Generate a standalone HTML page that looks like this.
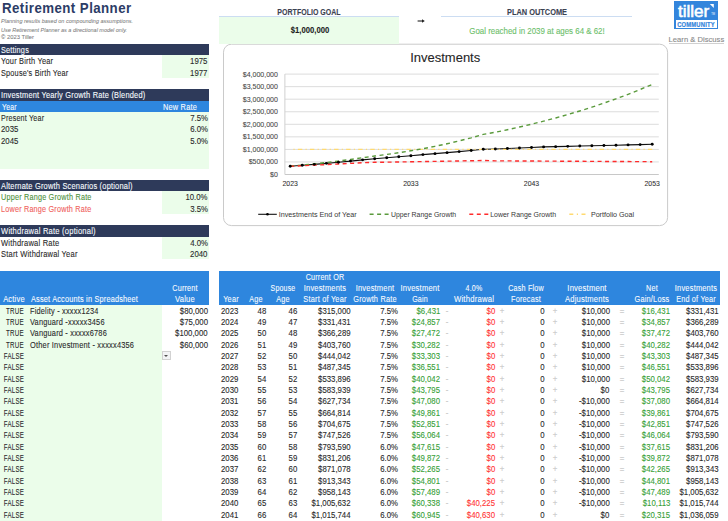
<!DOCTYPE html>
<html><head><meta charset="utf-8"><title>Retirement Planner</title>
<style>
html,body{margin:0;padding:0;background:#fff;}
body{width:728px;height:521px;position:relative;overflow:hidden;font-family:"Liberation Sans", sans-serif;}
.t{position:absolute;white-space:nowrap;line-height:1;-webkit-text-stroke:0.1px currentColor;}
.r{position:absolute;}
</style></head><body>
<svg class="r" style="left:0;top:0" width="728" height="521" viewBox="0 0 728 521" font-family='"Liberation Sans", sans-serif'><rect x="223.5" y="44.2" width="444.1" height="181.4" rx="8" ry="8" fill="#fff" stroke="#CACACA" stroke-width="1"/><line x1="284.9" x2="658.8" y1="161.95" y2="161.95" stroke="#DCDCDC" stroke-width="1"/><line x1="284.9" x2="658.8" y1="149.40" y2="149.40" stroke="#DCDCDC" stroke-width="1"/><line x1="284.9" x2="658.8" y1="136.85" y2="136.85" stroke="#DCDCDC" stroke-width="1"/><line x1="284.9" x2="658.8" y1="124.30" y2="124.30" stroke="#DCDCDC" stroke-width="1"/><line x1="284.9" x2="658.8" y1="111.75" y2="111.75" stroke="#DCDCDC" stroke-width="1"/><line x1="284.9" x2="658.8" y1="99.20" y2="99.20" stroke="#DCDCDC" stroke-width="1"/><line x1="284.9" x2="658.8" y1="86.65" y2="86.65" stroke="#DCDCDC" stroke-width="1"/><line x1="284.9" x2="658.8" y1="74.10" y2="74.10" stroke="#DCDCDC" stroke-width="1"/><line x1="284.9" x2="658.8" y1="174.5" y2="174.5" stroke="#C8C8C8" stroke-width="1"/><line x1="284.9" x2="284.9" y1="74.10" y2="174.5" stroke="#D0D0D0" stroke-width="1"/><text x="277.9" y="177.00" text-anchor="end" font-size="7.03" fill="#484848" stroke="#484848" stroke-width="0.08">$0</text><text x="277.9" y="164.45" text-anchor="end" font-size="7.03" fill="#484848" stroke="#484848" stroke-width="0.08">$500,000</text><text x="277.9" y="151.90" text-anchor="end" font-size="7.03" fill="#484848" stroke="#484848" stroke-width="0.08">$1,000,000</text><text x="277.9" y="139.35" text-anchor="end" font-size="7.03" fill="#484848" stroke="#484848" stroke-width="0.08">$1,500,000</text><text x="277.9" y="126.80" text-anchor="end" font-size="7.03" fill="#484848" stroke="#484848" stroke-width="0.08">$2,000,000</text><text x="277.9" y="114.25" text-anchor="end" font-size="7.03" fill="#484848" stroke="#484848" stroke-width="0.08">$2,500,000</text><text x="277.9" y="101.70" text-anchor="end" font-size="7.03" fill="#484848" stroke="#484848" stroke-width="0.08">$3,000,000</text><text x="277.9" y="89.15" text-anchor="end" font-size="7.03" fill="#484848" stroke="#484848" stroke-width="0.08">$3,500,000</text><text x="277.9" y="76.60" text-anchor="end" font-size="7.03" fill="#484848" stroke="#484848" stroke-width="0.08">$4,000,000</text><text x="290.20" y="185.9" text-anchor="middle" font-size="6.9" fill="#333" stroke="#333" stroke-width="0.08">2023</text><text x="410.87" y="185.9" text-anchor="middle" font-size="6.9" fill="#333" stroke="#333" stroke-width="0.08">2033</text><text x="531.53" y="185.9" text-anchor="middle" font-size="6.9" fill="#333" stroke="#333" stroke-width="0.08">2043</text><text x="652.20" y="185.9" text-anchor="middle" font-size="6.9" fill="#333" stroke="#333" stroke-width="0.08">2053</text><text x="445.2" y="61.7" text-anchor="middle" font-size="13" fill="#262626" stroke="#262626" stroke-width="0.1">Investments</text><polyline points="290.20,166.18 302.27,165.31 314.33,164.37 326.40,163.35 338.47,162.27 350.53,161.10 362.60,159.84 374.67,158.74 386.73,157.81 398.80,156.81 410.87,155.74 422.93,154.58 435.00,153.64 447.07,152.64 459.13,151.58 471.20,150.45 483.27,149.26 495.33,149.00 507.40,148.49 519.47,147.97 531.53,147.44 543.60,146.90 555.67,146.63 567.73,146.35 579.80,146.07 591.87,145.78 603.93,145.50 616.00,145.21 628.07,144.91 640.13,144.62 652.20,144.32" fill="none" stroke="#111" stroke-width="1.1"/><line x1="290.20" x2="652.20" y1="149.40" y2="149.40" stroke="#FFDA70" stroke-width="1.4" stroke-dasharray="4.4 3.3 1.1 3.27" stroke-dashoffset="4.4"/><polyline points="290.20,166.13 302.27,165.04 314.33,163.84 326.40,162.53 338.47,161.08 350.53,159.48 362.60,157.73 374.67,156.05 386.73,154.46 398.80,152.71 410.87,150.78 422.93,148.66 435.00,146.32 447.07,143.76 459.13,140.93 471.20,137.83 483.27,134.41 495.33,132.26 507.40,129.72 519.47,127.04 531.53,124.19 543.60,121.17 555.67,117.97 567.73,114.58 579.80,110.98 591.87,107.17 603.93,103.13 616.00,98.85 628.07,94.31 640.13,89.50 652.20,84.40" fill="none" stroke="#5A9A3C" stroke-width="1.4" stroke-dasharray="4 3.5"/><polyline points="290.20,166.27 302.27,165.73 314.33,165.17 326.40,164.59 338.47,163.99 350.53,163.38 362.60,162.74 374.67,162.32 386.73,162.15 398.80,161.97 410.87,161.78 422.93,161.59 435.00,161.38 447.07,161.18 459.13,160.96 471.20,160.74 483.27,160.51 495.33,160.83 507.40,160.90 519.47,160.97 531.53,161.03 543.60,161.10 555.67,161.17 567.73,161.23 579.80,161.30 591.87,161.37 603.93,161.43 616.00,161.50 628.07,161.56 640.13,161.63 652.20,161.69" fill="none" stroke="#FF2B2B" stroke-width="1.4" stroke-dasharray="4 3.5"/><circle cx="290.20" cy="166.18" r="1.45" fill="#000"/><circle cx="302.27" cy="165.31" r="1.45" fill="#000"/><circle cx="314.33" cy="164.37" r="1.45" fill="#000"/><circle cx="326.40" cy="163.35" r="1.45" fill="#000"/><circle cx="338.47" cy="162.27" r="1.45" fill="#000"/><circle cx="350.53" cy="161.10" r="1.45" fill="#000"/><circle cx="362.60" cy="159.84" r="1.45" fill="#000"/><circle cx="374.67" cy="158.74" r="1.45" fill="#000"/><circle cx="386.73" cy="157.81" r="1.45" fill="#000"/><circle cx="398.80" cy="156.81" r="1.45" fill="#000"/><circle cx="410.87" cy="155.74" r="1.45" fill="#000"/><circle cx="422.93" cy="154.58" r="1.45" fill="#000"/><circle cx="435.00" cy="153.64" r="1.45" fill="#000"/><circle cx="447.07" cy="152.64" r="1.45" fill="#000"/><circle cx="459.13" cy="151.58" r="1.45" fill="#000"/><circle cx="471.20" cy="150.45" r="1.45" fill="#000"/><circle cx="483.27" cy="149.26" r="1.45" fill="#000"/><circle cx="495.33" cy="149.00" r="1.45" fill="#000"/><circle cx="507.40" cy="148.49" r="1.45" fill="#000"/><circle cx="519.47" cy="147.97" r="1.45" fill="#000"/><circle cx="531.53" cy="147.44" r="1.45" fill="#000"/><circle cx="543.60" cy="146.90" r="1.45" fill="#000"/><circle cx="555.67" cy="146.63" r="1.45" fill="#000"/><circle cx="567.73" cy="146.35" r="1.45" fill="#000"/><circle cx="579.80" cy="146.07" r="1.45" fill="#000"/><circle cx="591.87" cy="145.78" r="1.45" fill="#000"/><circle cx="603.93" cy="145.50" r="1.45" fill="#000"/><circle cx="616.00" cy="145.21" r="1.45" fill="#000"/><circle cx="628.07" cy="144.91" r="1.45" fill="#000"/><circle cx="640.13" cy="144.62" r="1.45" fill="#000"/><circle cx="652.20" cy="144.32" r="1.45" fill="#000"/><line x1="258.2" x2="276.8" y1="214.3" y2="214.3" stroke="#111" stroke-width="1.1"/><circle cx="267.5" cy="214.3" r="1.3" fill="#000"/><text x="278.8" y="216.8" font-size="7.18" fill="#383838">Investments End of Year</text><line x1="369.6" x2="389.1" y1="214.3" y2="214.3" stroke="#5A9A3C" stroke-width="1.4" stroke-dasharray="4 3.5"/><text x="390.9" y="216.8" font-size="6.91" fill="#383838">Upper Range Growth</text><line x1="469.3" x2="488.8" y1="214.3" y2="214.3" stroke="#FF2B2B" stroke-width="1.4" stroke-dasharray="4 3.5"/><text x="490.2" y="216.8" font-size="6.98" fill="#383838">Lower Range Growth</text><line x1="569.3" x2="585.8" y1="214.3" y2="214.3" stroke="#FFDA70" stroke-width="1.4" stroke-dasharray="4 3.5 1.2 3.5"/><text x="590.9" y="216.8" font-size="7.15" fill="#383838">Portfolio Goal</text></svg>
<div class="r" style="left:0.00px;top:44.00px;width:209.00px;height:11.33px;background:#2E3A5A;"></div><div class="r" style="left:161.50px;top:55.33px;width:47.50px;height:22.67px;background:#EBFDEA;"></div><div class="r" style="left:0.00px;top:89.33px;width:209.00px;height:11.33px;background:#2E3A5A;"></div><div class="r" style="left:0.00px;top:100.66px;width:209.00px;height:11.33px;background:#2E86DE;"></div><div class="r" style="left:0.00px;top:112.00px;width:209.00px;height:56.67px;background:#EBFDEA;"></div><div class="r" style="left:0.00px;top:180.00px;width:209.00px;height:11.33px;background:#2E3A5A;"></div><div class="r" style="left:161.50px;top:191.33px;width:47.50px;height:22.67px;background:#EBFDEA;"></div><div class="r" style="left:0.00px;top:225.33px;width:209.00px;height:11.33px;background:#2E3A5A;"></div><div class="r" style="left:161.50px;top:236.66px;width:47.50px;height:22.67px;background:#EBFDEA;"></div><div class="r" style="left:0.00px;top:270.66px;width:209.00px;height:34.00px;background:#2E86DE;"></div><div class="r" style="left:0.00px;top:304.66px;width:161.50px;height:216.34px;background:#EBFDEA;"></div><div class="r" style="left:219.00px;top:270.66px;width:501.40px;height:34.00px;background:#2E86DE;"></div><div class="r" style="left:219.00px;top:17.00px;width:180.30px;height:26.60px;background:#EBFDEA;"></div><div class="r" style="left:219.00px;top:16.00px;width:180.30px;height:1.30px;background:#CCDDF2;"></div><div class="r" style="left:441.40px;top:16.00px;width:190.90px;height:1.30px;background:#CCDDF2;"></div><div class="r" style="left:674.10px;top:1.40px;width:43.80px;height:28.10px;background:#3385DC;"></div><div class="r" style="left:676.00px;top:19.50px;width:40.90px;height:8.60px;background:#FFFFFF;"></div><div class="r" style="left:668.60px;top:42.60px;width:55.70px;height:0.80px;background:#D0D0D0;"></div>
<div class="r" style="left:161.8px;top:351.2px;width:9px;height:9px;border:1px solid #D2D2D2;background:#F2F3F5;box-sizing:border-box"></div><div class="r" style="left:164.2px;top:354.8px;width:0;height:0;border-left:2.1px solid transparent;border-right:2.1px solid transparent;border-top:2.2px solid #505050"></div><svg class="r" style="left:410px;top:14px" width="20" height="14"><path d="M7.6 7 H13.2" stroke="#222" stroke-width="1.1"/><path d="M12.0 5.2 L14.8 7 L12.0 8.8 Z" fill="#222"/></svg><svg class="r" style="left:0;top:0" width="728" height="40"><path d="M709.8 4.0 L713.8 4.0 L713.8 8.0 Z" fill="#fff"/><text x="711.2" y="15.2" font-size="2.6" fill="#fff" font-family="Liberation Sans">TM</text></svg>
<div class="t" style="top:2px;font-size:13.8px;color:#2C3C66;font-weight:700;left:2.30px;transform:scaleX(0.9627);transform-origin:0 0;-webkit-text-stroke:0;letter-spacing:0.45px;">Retirement Planner</div><div class="t" style="top:18px;font-size:6.1px;color:#7A7A7A;font-style:italic;left:1.20px;transform:scaleX(0.9040);transform-origin:0 0;-webkit-text-stroke:0.05px currentColor;">Planning results based on compounding assumptions.</div><div class="t" style="top:27px;font-size:6.1px;color:#7A7A7A;font-style:italic;left:1.20px;transform:scaleX(0.8992);transform-origin:0 0;-webkit-text-stroke:0.05px currentColor;">Use Retirement Planner as a directional model only.</div><div class="t" style="top:34px;font-size:6.2px;color:#7A7A7A;left:1.20px;transform:scaleX(0.9475);transform-origin:0 0;-webkit-text-stroke:0.05px currentColor;">© 2023 Tiller</div><div class="t" style="top:46px;font-size:8.3px;color:#F7FAFE;left:1.30px;transform:scaleX(0.8819);transform-origin:0 0;letter-spacing:0.22px;">Settings</div><div class="t" style="top:57px;font-size:8.3px;color:#2A2A2A;left:1.30px;transform:scaleX(0.8962);transform-origin:0 0;letter-spacing:0.22px;">Your Birth Year</div><div class="t" style="top:57px;font-size:8.3px;color:#2A2A2A;right:520.40px;transform:scaleX(0.9400);transform-origin:100% 0;">1975</div><div class="t" style="top:69px;font-size:8.3px;color:#2A2A2A;left:1.30px;transform:scaleX(0.8828);transform-origin:0 0;letter-spacing:0.22px;">Spouse's Birth Year</div><div class="t" style="top:69px;font-size:8.3px;color:#2A2A2A;right:520.40px;transform:scaleX(0.9400);transform-origin:100% 0;">1977</div><div class="t" style="top:91px;font-size:8.3px;color:#F7FAFE;left:1.30px;transform:scaleX(0.8956);transform-origin:0 0;letter-spacing:0.22px;">Investment Yearly Growth Rate (Blended)</div><div class="t" style="top:103px;font-size:8.3px;color:#F7FAFE;left:1.80px;transform:scaleX(0.8326);transform-origin:0 0;letter-spacing:0.22px;">Year</div><div class="t" style="top:103px;font-size:8.3px;color:#F7FAFE;left:163.00px;transform:scaleX(0.8900);transform-origin:0 0;letter-spacing:0.22px;">New Rate</div><div class="t" style="top:114px;font-size:8.3px;color:#2A2A2A;left:1.30px;transform:scaleX(0.8613);transform-origin:0 0;letter-spacing:0.22px;">Present Year</div><div class="t" style="top:114px;font-size:8.3px;color:#2A2A2A;right:520.40px;transform:scaleX(0.9400);transform-origin:100% 0;">7.5%</div><div class="t" style="top:125px;font-size:8.3px;color:#2A2A2A;left:1.30px;transform:scaleX(0.9400);transform-origin:0 0;">2035</div><div class="t" style="top:125px;font-size:8.3px;color:#2A2A2A;right:520.40px;transform:scaleX(0.9400);transform-origin:100% 0;">6.0%</div><div class="t" style="top:137px;font-size:8.3px;color:#2A2A2A;left:1.30px;transform:scaleX(0.9400);transform-origin:0 0;">2045</div><div class="t" style="top:137px;font-size:8.3px;color:#2A2A2A;right:520.40px;transform:scaleX(0.9400);transform-origin:100% 0;">5.0%</div><div class="t" style="top:182px;font-size:8.3px;color:#F7FAFE;left:1.30px;transform:scaleX(0.8990);transform-origin:0 0;letter-spacing:0.22px;">Alternate Growth Scenarios (optional)</div><div class="t" style="top:193px;font-size:8.3px;color:#4E913C;left:1.40px;transform:scaleX(0.8771);transform-origin:0 0;letter-spacing:0.22px;">Upper Range Growth Rate</div><div class="t" style="top:193px;font-size:8.3px;color:#2A2A2A;right:520.40px;transform:scaleX(0.9400);transform-origin:100% 0;">10.0%</div><div class="t" style="top:205px;font-size:8.3px;color:#F0625D;left:1.40px;transform:scaleX(0.8751);transform-origin:0 0;letter-spacing:0.22px;">Lower Range Growth Rate</div><div class="t" style="top:205px;font-size:8.3px;color:#2A2A2A;right:520.40px;transform:scaleX(0.9400);transform-origin:100% 0;">3.5%</div><div class="t" style="top:227px;font-size:8.3px;color:#F7FAFE;left:1.30px;transform:scaleX(0.9161);transform-origin:0 0;letter-spacing:0.22px;">Withdrawal Rate (optional)</div><div class="t" style="top:239px;font-size:8.3px;color:#2A2A2A;left:1.40px;transform:scaleX(0.9101);transform-origin:0 0;letter-spacing:0.22px;">Withdrawal Rate</div><div class="t" style="top:239px;font-size:8.3px;color:#2A2A2A;right:520.40px;transform:scaleX(0.9400);transform-origin:100% 0;">4.0%</div><div class="t" style="top:250px;font-size:8.3px;color:#2A2A2A;left:1.40px;transform:scaleX(0.9075);transform-origin:0 0;letter-spacing:0.22px;">Start Withdrawal Year</div><div class="t" style="top:250px;font-size:8.3px;color:#2A2A2A;right:520.40px;transform:scaleX(0.9400);transform-origin:100% 0;">2040</div><div class="t" style="top:295px;font-size:8.3px;color:#F7FAFE;left:-136.20px;width:300px;text-align:center;transform:scaleX(0.9071);transform-origin:50% 0;letter-spacing:0.22px;">Active</div><div class="t" style="top:295px;font-size:8.3px;color:#F7FAFE;left:30.50px;transform:scaleX(0.8834);transform-origin:0 0;letter-spacing:0.22px;">Asset Accounts in Spreadsheet</div><div class="t" style="top:284px;font-size:8.3px;color:#F7FAFE;left:34.90px;width:300px;text-align:center;transform:scaleX(0.8693);transform-origin:50% 0;letter-spacing:0.22px;">Current</div><div class="t" style="top:295px;font-size:8.3px;color:#F7FAFE;left:35.40px;width:300px;text-align:center;transform:scaleX(0.9117);transform-origin:50% 0;letter-spacing:0.22px;">Value</div><div class="t" style="top:307px;font-size:8.3px;color:#2A2A2A;left:-135.50px;width:300px;text-align:center;transform:scaleX(0.7500);transform-origin:50% 0;letter-spacing:0.35px;">TRUE</div><div class="t" style="top:307px;font-size:8.3px;color:#2A2A2A;left:30.30px;transform:scaleX(0.8878);transform-origin:0 0;letter-spacing:0.22px;">Fidelity - xxxxx1234</div><div class="t" style="top:307px;font-size:8.3px;color:#2A2A2A;right:520.50px;transform:scaleX(0.9400);transform-origin:100% 0;">$80,000</div><div class="t" style="top:318px;font-size:8.3px;color:#2A2A2A;left:-135.50px;width:300px;text-align:center;transform:scaleX(0.7500);transform-origin:50% 0;letter-spacing:0.35px;">TRUE</div><div class="t" style="top:318px;font-size:8.3px;color:#2A2A2A;left:30.30px;transform:scaleX(0.8911);transform-origin:0 0;letter-spacing:0.22px;">Vanguard -xxxxx3456</div><div class="t" style="top:318px;font-size:8.3px;color:#2A2A2A;right:520.50px;transform:scaleX(0.9400);transform-origin:100% 0;">$75,000</div><div class="t" style="top:329px;font-size:8.3px;color:#2A2A2A;left:-135.50px;width:300px;text-align:center;transform:scaleX(0.7500);transform-origin:50% 0;letter-spacing:0.35px;">TRUE</div><div class="t" style="top:329px;font-size:8.3px;color:#2A2A2A;left:30.30px;transform:scaleX(0.8918);transform-origin:0 0;letter-spacing:0.22px;">Vanguard - xxxxx6786</div><div class="t" style="top:329px;font-size:8.3px;color:#2A2A2A;right:520.50px;transform:scaleX(0.9400);transform-origin:100% 0;">$100,000</div><div class="t" style="top:341px;font-size:8.3px;color:#2A2A2A;left:-135.50px;width:300px;text-align:center;transform:scaleX(0.7500);transform-origin:50% 0;letter-spacing:0.35px;">TRUE</div><div class="t" style="top:341px;font-size:8.3px;color:#2A2A2A;left:30.30px;transform:scaleX(0.8954);transform-origin:0 0;letter-spacing:0.22px;">Other Investment - xxxxx4356</div><div class="t" style="top:341px;font-size:8.3px;color:#2A2A2A;right:520.50px;transform:scaleX(0.9400);transform-origin:100% 0;">$60,000</div><div class="t" style="top:352px;font-size:8.3px;color:#2A2A2A;left:-136.20px;width:300px;text-align:center;transform:scaleX(0.7397);transform-origin:50% 0;letter-spacing:0.35px;">FALSE</div><div class="t" style="top:363px;font-size:8.3px;color:#2A2A2A;left:-136.20px;width:300px;text-align:center;transform:scaleX(0.7397);transform-origin:50% 0;letter-spacing:0.35px;">FALSE</div><div class="t" style="top:375px;font-size:8.3px;color:#2A2A2A;left:-136.20px;width:300px;text-align:center;transform:scaleX(0.7397);transform-origin:50% 0;letter-spacing:0.35px;">FALSE</div><div class="t" style="top:386px;font-size:8.3px;color:#2A2A2A;left:-136.20px;width:300px;text-align:center;transform:scaleX(0.7397);transform-origin:50% 0;letter-spacing:0.35px;">FALSE</div><div class="t" style="top:397px;font-size:8.3px;color:#2A2A2A;left:-136.20px;width:300px;text-align:center;transform:scaleX(0.7397);transform-origin:50% 0;letter-spacing:0.35px;">FALSE</div><div class="t" style="top:409px;font-size:8.3px;color:#2A2A2A;left:-136.20px;width:300px;text-align:center;transform:scaleX(0.7397);transform-origin:50% 0;letter-spacing:0.35px;">FALSE</div><div class="t" style="top:420px;font-size:8.3px;color:#2A2A2A;left:-136.20px;width:300px;text-align:center;transform:scaleX(0.7397);transform-origin:50% 0;letter-spacing:0.35px;">FALSE</div><div class="t" style="top:431px;font-size:8.3px;color:#2A2A2A;left:-136.20px;width:300px;text-align:center;transform:scaleX(0.7397);transform-origin:50% 0;letter-spacing:0.35px;">FALSE</div><div class="t" style="top:443px;font-size:8.3px;color:#2A2A2A;left:-136.20px;width:300px;text-align:center;transform:scaleX(0.7397);transform-origin:50% 0;letter-spacing:0.35px;">FALSE</div><div class="t" style="top:454px;font-size:8.3px;color:#2A2A2A;left:-136.20px;width:300px;text-align:center;transform:scaleX(0.7397);transform-origin:50% 0;letter-spacing:0.35px;">FALSE</div><div class="t" style="top:465px;font-size:8.3px;color:#2A2A2A;left:-136.20px;width:300px;text-align:center;transform:scaleX(0.7397);transform-origin:50% 0;letter-spacing:0.35px;">FALSE</div><div class="t" style="top:477px;font-size:8.3px;color:#2A2A2A;left:-136.20px;width:300px;text-align:center;transform:scaleX(0.7397);transform-origin:50% 0;letter-spacing:0.35px;">FALSE</div><div class="t" style="top:488px;font-size:8.3px;color:#2A2A2A;left:-136.20px;width:300px;text-align:center;transform:scaleX(0.7397);transform-origin:50% 0;letter-spacing:0.35px;">FALSE</div><div class="t" style="top:499px;font-size:8.3px;color:#2A2A2A;left:-136.20px;width:300px;text-align:center;transform:scaleX(0.7397);transform-origin:50% 0;letter-spacing:0.35px;">FALSE</div><div class="t" style="top:511px;font-size:8.3px;color:#2A2A2A;left:-136.20px;width:300px;text-align:center;transform:scaleX(0.7397);transform-origin:50% 0;letter-spacing:0.35px;">FALSE</div><div class="t" style="top:295px;font-size:8.3px;color:#F7FAFE;left:81.40px;width:300px;text-align:center;transform:scaleX(0.8835);transform-origin:50% 0;letter-spacing:0.22px;">Year</div><div class="t" style="top:295px;font-size:8.3px;color:#F7FAFE;left:105.50px;width:300px;text-align:center;transform:scaleX(0.8745);transform-origin:50% 0;letter-spacing:0.22px;">Age</div><div class="t" style="top:284px;font-size:8.3px;color:#F7FAFE;left:133.40px;width:300px;text-align:center;transform:scaleX(0.8416);transform-origin:50% 0;letter-spacing:0.22px;">Spouse</div><div class="t" style="top:295px;font-size:8.3px;color:#F7FAFE;left:133.40px;width:300px;text-align:center;transform:scaleX(0.8745);transform-origin:50% 0;letter-spacing:0.22px;">Age</div><div class="t" style="top:273px;font-size:8.3px;color:#F7FAFE;left:175.20px;width:300px;text-align:center;transform:scaleX(0.8672);transform-origin:50% 0;letter-spacing:0.22px;">Current OR</div><div class="t" style="top:284px;font-size:8.3px;color:#F7FAFE;left:175.20px;width:300px;text-align:center;transform:scaleX(0.8991);transform-origin:50% 0;letter-spacing:0.22px;">Investments</div><div class="t" style="top:295px;font-size:8.3px;color:#F7FAFE;left:175.20px;width:300px;text-align:center;transform:scaleX(0.8922);transform-origin:50% 0;letter-spacing:0.22px;">Start of Year</div><div class="t" style="top:284px;font-size:8.3px;color:#F7FAFE;left:225.30px;width:300px;text-align:center;transform:scaleX(0.9046);transform-origin:50% 0;letter-spacing:0.22px;">Investment</div><div class="t" style="top:295px;font-size:8.3px;color:#F7FAFE;left:225.30px;width:300px;text-align:center;transform:scaleX(0.8857);transform-origin:50% 0;letter-spacing:0.22px;">Growth Rate</div><div class="t" style="top:284px;font-size:8.3px;color:#F7FAFE;left:270.30px;width:300px;text-align:center;transform:scaleX(0.9116);transform-origin:50% 0;letter-spacing:0.22px;">Investment</div><div class="t" style="top:295px;font-size:8.3px;color:#F7FAFE;left:270.30px;width:300px;text-align:center;transform:scaleX(0.8530);transform-origin:50% 0;letter-spacing:0.22px;">Gain</div><div class="t" style="top:284px;font-size:8.3px;color:#F7FAFE;left:324.20px;width:300px;text-align:center;transform:scaleX(0.8486);transform-origin:50% 0;letter-spacing:0.22px;">4.0%</div><div class="t" style="top:295px;font-size:8.3px;color:#F7FAFE;left:324.20px;width:300px;text-align:center;transform:scaleX(0.9295);transform-origin:50% 0;letter-spacing:0.22px;">Withdrawal</div><div class="t" style="top:284px;font-size:8.3px;color:#F7FAFE;left:376.40px;width:300px;text-align:center;transform:scaleX(0.8647);transform-origin:50% 0;letter-spacing:0.22px;">Cash Flow</div><div class="t" style="top:295px;font-size:8.3px;color:#F7FAFE;left:376.40px;width:300px;text-align:center;transform:scaleX(0.8811);transform-origin:50% 0;letter-spacing:0.22px;">Forecast</div><div class="t" style="top:284px;font-size:8.3px;color:#F7FAFE;left:437.00px;width:300px;text-align:center;transform:scaleX(0.9186);transform-origin:50% 0;letter-spacing:0.22px;">Investment</div><div class="t" style="top:295px;font-size:8.3px;color:#F7FAFE;left:437.00px;width:300px;text-align:center;transform:scaleX(0.9152);transform-origin:50% 0;letter-spacing:0.22px;">Adjustments</div><div class="t" style="top:284px;font-size:8.3px;color:#F7FAFE;left:501.50px;width:300px;text-align:center;transform:scaleX(0.8690);transform-origin:50% 0;letter-spacing:0.22px;">Net</div><div class="t" style="top:295px;font-size:8.3px;color:#F7FAFE;left:501.50px;width:300px;text-align:center;transform:scaleX(0.8896);transform-origin:50% 0;letter-spacing:0.22px;">Gain/Loss</div><div class="t" style="top:284px;font-size:8.3px;color:#F7FAFE;left:546.00px;width:300px;text-align:center;transform:scaleX(0.8970);transform-origin:50% 0;letter-spacing:0.22px;">Investments</div><div class="t" style="top:295px;font-size:8.3px;color:#F7FAFE;left:546.00px;width:300px;text-align:center;transform:scaleX(0.8736);transform-origin:50% 0;letter-spacing:0.22px;">End of Year</div><div class="t" style="top:307px;font-size:8.3px;color:#2A2A2A;left:220.80px;transform:scaleX(0.9400);transform-origin:0 0;">2023</div><div class="t" style="top:307px;font-size:8.3px;color:#2A2A2A;right:461.60px;transform:scaleX(0.9400);transform-origin:100% 0;">48</div><div class="t" style="top:307px;font-size:8.3px;color:#2A2A2A;right:431.00px;transform:scaleX(0.9400);transform-origin:100% 0;">46</div><div class="t" style="top:307px;font-size:8.3px;color:#2A2A2A;right:377.80px;transform:scaleX(0.9400);transform-origin:100% 0;">$315,000</div><div class="t" style="top:307px;font-size:8.3px;color:#2A2A2A;right:330.00px;transform:scaleX(0.9400);transform-origin:100% 0;">7.5%</div><div class="t" style="top:307px;font-size:8.3px;color:#37A037;right:287.70px;transform:scaleX(0.9400);transform-origin:100% 0;">$6,431</div><div class="t" style="top:307px;font-size:8.3px;color:#CACACA;left:297.00px;width:300px;text-align:center;transform:scaleX(0.9400);transform-origin:50% 0;">-</div><div class="t" style="top:307px;font-size:8.3px;color:#FF3535;right:233.00px;transform:scaleX(0.9400);transform-origin:100% 0;">$0</div><div class="t" style="top:307px;font-size:8.3px;color:#CACACA;left:351.50px;width:300px;text-align:center;transform:scaleX(0.9400);transform-origin:50% 0;">+</div><div class="t" style="top:307px;font-size:8.3px;color:#2A2A2A;right:183.20px;transform:scaleX(0.9400);transform-origin:100% 0;">0</div><div class="t" style="top:307px;font-size:8.3px;color:#CACACA;left:404.70px;width:300px;text-align:center;transform:scaleX(0.9400);transform-origin:50% 0;">+</div><div class="t" style="top:307px;font-size:8.3px;color:#2A2A2A;right:118.40px;transform:scaleX(0.9400);transform-origin:100% 0;">$10,000</div><div class="t" style="top:307px;font-size:8.3px;color:#CACACA;left:471.50px;width:300px;text-align:center;transform:scaleX(0.9400);transform-origin:50% 0;">=</div><div class="t" style="top:307px;font-size:8.3px;color:#37A037;right:57.70px;transform:scaleX(0.9400);transform-origin:100% 0;">$16,431</div><div class="t" style="top:307px;font-size:8.3px;color:#2A2A2A;right:9.90px;transform:scaleX(0.9400);transform-origin:100% 0;">$331,431</div><div class="t" style="top:318px;font-size:8.3px;color:#2A2A2A;left:220.80px;transform:scaleX(0.9400);transform-origin:0 0;">2024</div><div class="t" style="top:318px;font-size:8.3px;color:#2A2A2A;right:461.60px;transform:scaleX(0.9400);transform-origin:100% 0;">49</div><div class="t" style="top:318px;font-size:8.3px;color:#2A2A2A;right:431.00px;transform:scaleX(0.9400);transform-origin:100% 0;">47</div><div class="t" style="top:318px;font-size:8.3px;color:#2A2A2A;right:377.80px;transform:scaleX(0.9400);transform-origin:100% 0;">$331,431</div><div class="t" style="top:318px;font-size:8.3px;color:#2A2A2A;right:330.00px;transform:scaleX(0.9400);transform-origin:100% 0;">7.5%</div><div class="t" style="top:318px;font-size:8.3px;color:#37A037;right:287.70px;transform:scaleX(0.9400);transform-origin:100% 0;">$24,857</div><div class="t" style="top:318px;font-size:8.3px;color:#CACACA;left:297.00px;width:300px;text-align:center;transform:scaleX(0.9400);transform-origin:50% 0;">-</div><div class="t" style="top:318px;font-size:8.3px;color:#FF3535;right:233.00px;transform:scaleX(0.9400);transform-origin:100% 0;">$0</div><div class="t" style="top:318px;font-size:8.3px;color:#CACACA;left:351.50px;width:300px;text-align:center;transform:scaleX(0.9400);transform-origin:50% 0;">+</div><div class="t" style="top:318px;font-size:8.3px;color:#2A2A2A;right:183.20px;transform:scaleX(0.9400);transform-origin:100% 0;">0</div><div class="t" style="top:318px;font-size:8.3px;color:#CACACA;left:404.70px;width:300px;text-align:center;transform:scaleX(0.9400);transform-origin:50% 0;">+</div><div class="t" style="top:318px;font-size:8.3px;color:#2A2A2A;right:118.40px;transform:scaleX(0.9400);transform-origin:100% 0;">$10,000</div><div class="t" style="top:318px;font-size:8.3px;color:#CACACA;left:471.50px;width:300px;text-align:center;transform:scaleX(0.9400);transform-origin:50% 0;">=</div><div class="t" style="top:318px;font-size:8.3px;color:#37A037;right:57.70px;transform:scaleX(0.9400);transform-origin:100% 0;">$34,857</div><div class="t" style="top:318px;font-size:8.3px;color:#2A2A2A;right:9.90px;transform:scaleX(0.9400);transform-origin:100% 0;">$366,289</div><div class="t" style="top:329px;font-size:8.3px;color:#2A2A2A;left:220.80px;transform:scaleX(0.9400);transform-origin:0 0;">2025</div><div class="t" style="top:329px;font-size:8.3px;color:#2A2A2A;right:461.60px;transform:scaleX(0.9400);transform-origin:100% 0;">50</div><div class="t" style="top:329px;font-size:8.3px;color:#2A2A2A;right:431.00px;transform:scaleX(0.9400);transform-origin:100% 0;">48</div><div class="t" style="top:329px;font-size:8.3px;color:#2A2A2A;right:377.80px;transform:scaleX(0.9400);transform-origin:100% 0;">$366,289</div><div class="t" style="top:329px;font-size:8.3px;color:#2A2A2A;right:330.00px;transform:scaleX(0.9400);transform-origin:100% 0;">7.5%</div><div class="t" style="top:329px;font-size:8.3px;color:#37A037;right:287.70px;transform:scaleX(0.9400);transform-origin:100% 0;">$27,472</div><div class="t" style="top:329px;font-size:8.3px;color:#CACACA;left:297.00px;width:300px;text-align:center;transform:scaleX(0.9400);transform-origin:50% 0;">-</div><div class="t" style="top:329px;font-size:8.3px;color:#FF3535;right:233.00px;transform:scaleX(0.9400);transform-origin:100% 0;">$0</div><div class="t" style="top:329px;font-size:8.3px;color:#CACACA;left:351.50px;width:300px;text-align:center;transform:scaleX(0.9400);transform-origin:50% 0;">+</div><div class="t" style="top:329px;font-size:8.3px;color:#2A2A2A;right:183.20px;transform:scaleX(0.9400);transform-origin:100% 0;">0</div><div class="t" style="top:329px;font-size:8.3px;color:#CACACA;left:404.70px;width:300px;text-align:center;transform:scaleX(0.9400);transform-origin:50% 0;">+</div><div class="t" style="top:329px;font-size:8.3px;color:#2A2A2A;right:118.40px;transform:scaleX(0.9400);transform-origin:100% 0;">$10,000</div><div class="t" style="top:329px;font-size:8.3px;color:#CACACA;left:471.50px;width:300px;text-align:center;transform:scaleX(0.9400);transform-origin:50% 0;">=</div><div class="t" style="top:329px;font-size:8.3px;color:#37A037;right:57.70px;transform:scaleX(0.9400);transform-origin:100% 0;">$37,472</div><div class="t" style="top:329px;font-size:8.3px;color:#2A2A2A;right:9.90px;transform:scaleX(0.9400);transform-origin:100% 0;">$403,760</div><div class="t" style="top:341px;font-size:8.3px;color:#2A2A2A;left:220.80px;transform:scaleX(0.9400);transform-origin:0 0;">2026</div><div class="t" style="top:341px;font-size:8.3px;color:#2A2A2A;right:461.60px;transform:scaleX(0.9400);transform-origin:100% 0;">51</div><div class="t" style="top:341px;font-size:8.3px;color:#2A2A2A;right:431.00px;transform:scaleX(0.9400);transform-origin:100% 0;">49</div><div class="t" style="top:341px;font-size:8.3px;color:#2A2A2A;right:377.80px;transform:scaleX(0.9400);transform-origin:100% 0;">$403,760</div><div class="t" style="top:341px;font-size:8.3px;color:#2A2A2A;right:330.00px;transform:scaleX(0.9400);transform-origin:100% 0;">7.5%</div><div class="t" style="top:341px;font-size:8.3px;color:#37A037;right:287.70px;transform:scaleX(0.9400);transform-origin:100% 0;">$30,282</div><div class="t" style="top:341px;font-size:8.3px;color:#CACACA;left:297.00px;width:300px;text-align:center;transform:scaleX(0.9400);transform-origin:50% 0;">-</div><div class="t" style="top:341px;font-size:8.3px;color:#FF3535;right:233.00px;transform:scaleX(0.9400);transform-origin:100% 0;">$0</div><div class="t" style="top:341px;font-size:8.3px;color:#CACACA;left:351.50px;width:300px;text-align:center;transform:scaleX(0.9400);transform-origin:50% 0;">+</div><div class="t" style="top:341px;font-size:8.3px;color:#2A2A2A;right:183.20px;transform:scaleX(0.9400);transform-origin:100% 0;">0</div><div class="t" style="top:341px;font-size:8.3px;color:#CACACA;left:404.70px;width:300px;text-align:center;transform:scaleX(0.9400);transform-origin:50% 0;">+</div><div class="t" style="top:341px;font-size:8.3px;color:#2A2A2A;right:118.40px;transform:scaleX(0.9400);transform-origin:100% 0;">$10,000</div><div class="t" style="top:341px;font-size:8.3px;color:#CACACA;left:471.50px;width:300px;text-align:center;transform:scaleX(0.9400);transform-origin:50% 0;">=</div><div class="t" style="top:341px;font-size:8.3px;color:#37A037;right:57.70px;transform:scaleX(0.9400);transform-origin:100% 0;">$40,282</div><div class="t" style="top:341px;font-size:8.3px;color:#2A2A2A;right:9.90px;transform:scaleX(0.9400);transform-origin:100% 0;">$444,042</div><div class="t" style="top:352px;font-size:8.3px;color:#2A2A2A;left:220.80px;transform:scaleX(0.9400);transform-origin:0 0;">2027</div><div class="t" style="top:352px;font-size:8.3px;color:#2A2A2A;right:461.60px;transform:scaleX(0.9400);transform-origin:100% 0;">52</div><div class="t" style="top:352px;font-size:8.3px;color:#2A2A2A;right:431.00px;transform:scaleX(0.9400);transform-origin:100% 0;">50</div><div class="t" style="top:352px;font-size:8.3px;color:#2A2A2A;right:377.80px;transform:scaleX(0.9400);transform-origin:100% 0;">$444,042</div><div class="t" style="top:352px;font-size:8.3px;color:#2A2A2A;right:330.00px;transform:scaleX(0.9400);transform-origin:100% 0;">7.5%</div><div class="t" style="top:352px;font-size:8.3px;color:#37A037;right:287.70px;transform:scaleX(0.9400);transform-origin:100% 0;">$33,303</div><div class="t" style="top:352px;font-size:8.3px;color:#CACACA;left:297.00px;width:300px;text-align:center;transform:scaleX(0.9400);transform-origin:50% 0;">-</div><div class="t" style="top:352px;font-size:8.3px;color:#FF3535;right:233.00px;transform:scaleX(0.9400);transform-origin:100% 0;">$0</div><div class="t" style="top:352px;font-size:8.3px;color:#CACACA;left:351.50px;width:300px;text-align:center;transform:scaleX(0.9400);transform-origin:50% 0;">+</div><div class="t" style="top:352px;font-size:8.3px;color:#2A2A2A;right:183.20px;transform:scaleX(0.9400);transform-origin:100% 0;">0</div><div class="t" style="top:352px;font-size:8.3px;color:#CACACA;left:404.70px;width:300px;text-align:center;transform:scaleX(0.9400);transform-origin:50% 0;">+</div><div class="t" style="top:352px;font-size:8.3px;color:#2A2A2A;right:118.40px;transform:scaleX(0.9400);transform-origin:100% 0;">$10,000</div><div class="t" style="top:352px;font-size:8.3px;color:#CACACA;left:471.50px;width:300px;text-align:center;transform:scaleX(0.9400);transform-origin:50% 0;">=</div><div class="t" style="top:352px;font-size:8.3px;color:#37A037;right:57.70px;transform:scaleX(0.9400);transform-origin:100% 0;">$43,303</div><div class="t" style="top:352px;font-size:8.3px;color:#2A2A2A;right:9.90px;transform:scaleX(0.9400);transform-origin:100% 0;">$487,345</div><div class="t" style="top:363px;font-size:8.3px;color:#2A2A2A;left:220.80px;transform:scaleX(0.9400);transform-origin:0 0;">2028</div><div class="t" style="top:363px;font-size:8.3px;color:#2A2A2A;right:461.60px;transform:scaleX(0.9400);transform-origin:100% 0;">53</div><div class="t" style="top:363px;font-size:8.3px;color:#2A2A2A;right:431.00px;transform:scaleX(0.9400);transform-origin:100% 0;">51</div><div class="t" style="top:363px;font-size:8.3px;color:#2A2A2A;right:377.80px;transform:scaleX(0.9400);transform-origin:100% 0;">$487,345</div><div class="t" style="top:363px;font-size:8.3px;color:#2A2A2A;right:330.00px;transform:scaleX(0.9400);transform-origin:100% 0;">7.5%</div><div class="t" style="top:363px;font-size:8.3px;color:#37A037;right:287.70px;transform:scaleX(0.9400);transform-origin:100% 0;">$36,551</div><div class="t" style="top:363px;font-size:8.3px;color:#CACACA;left:297.00px;width:300px;text-align:center;transform:scaleX(0.9400);transform-origin:50% 0;">-</div><div class="t" style="top:363px;font-size:8.3px;color:#FF3535;right:233.00px;transform:scaleX(0.9400);transform-origin:100% 0;">$0</div><div class="t" style="top:363px;font-size:8.3px;color:#CACACA;left:351.50px;width:300px;text-align:center;transform:scaleX(0.9400);transform-origin:50% 0;">+</div><div class="t" style="top:363px;font-size:8.3px;color:#2A2A2A;right:183.20px;transform:scaleX(0.9400);transform-origin:100% 0;">0</div><div class="t" style="top:363px;font-size:8.3px;color:#CACACA;left:404.70px;width:300px;text-align:center;transform:scaleX(0.9400);transform-origin:50% 0;">+</div><div class="t" style="top:363px;font-size:8.3px;color:#2A2A2A;right:118.40px;transform:scaleX(0.9400);transform-origin:100% 0;">$10,000</div><div class="t" style="top:363px;font-size:8.3px;color:#CACACA;left:471.50px;width:300px;text-align:center;transform:scaleX(0.9400);transform-origin:50% 0;">=</div><div class="t" style="top:363px;font-size:8.3px;color:#37A037;right:57.70px;transform:scaleX(0.9400);transform-origin:100% 0;">$46,551</div><div class="t" style="top:363px;font-size:8.3px;color:#2A2A2A;right:9.90px;transform:scaleX(0.9400);transform-origin:100% 0;">$533,896</div><div class="t" style="top:375px;font-size:8.3px;color:#2A2A2A;left:220.80px;transform:scaleX(0.9400);transform-origin:0 0;">2029</div><div class="t" style="top:375px;font-size:8.3px;color:#2A2A2A;right:461.60px;transform:scaleX(0.9400);transform-origin:100% 0;">54</div><div class="t" style="top:375px;font-size:8.3px;color:#2A2A2A;right:431.00px;transform:scaleX(0.9400);transform-origin:100% 0;">52</div><div class="t" style="top:375px;font-size:8.3px;color:#2A2A2A;right:377.80px;transform:scaleX(0.9400);transform-origin:100% 0;">$533,896</div><div class="t" style="top:375px;font-size:8.3px;color:#2A2A2A;right:330.00px;transform:scaleX(0.9400);transform-origin:100% 0;">7.5%</div><div class="t" style="top:375px;font-size:8.3px;color:#37A037;right:287.70px;transform:scaleX(0.9400);transform-origin:100% 0;">$40,042</div><div class="t" style="top:375px;font-size:8.3px;color:#CACACA;left:297.00px;width:300px;text-align:center;transform:scaleX(0.9400);transform-origin:50% 0;">-</div><div class="t" style="top:375px;font-size:8.3px;color:#FF3535;right:233.00px;transform:scaleX(0.9400);transform-origin:100% 0;">$0</div><div class="t" style="top:375px;font-size:8.3px;color:#CACACA;left:351.50px;width:300px;text-align:center;transform:scaleX(0.9400);transform-origin:50% 0;">+</div><div class="t" style="top:375px;font-size:8.3px;color:#2A2A2A;right:183.20px;transform:scaleX(0.9400);transform-origin:100% 0;">0</div><div class="t" style="top:375px;font-size:8.3px;color:#CACACA;left:404.70px;width:300px;text-align:center;transform:scaleX(0.9400);transform-origin:50% 0;">+</div><div class="t" style="top:375px;font-size:8.3px;color:#2A2A2A;right:118.40px;transform:scaleX(0.9400);transform-origin:100% 0;">$10,000</div><div class="t" style="top:375px;font-size:8.3px;color:#CACACA;left:471.50px;width:300px;text-align:center;transform:scaleX(0.9400);transform-origin:50% 0;">=</div><div class="t" style="top:375px;font-size:8.3px;color:#37A037;right:57.70px;transform:scaleX(0.9400);transform-origin:100% 0;">$50,042</div><div class="t" style="top:375px;font-size:8.3px;color:#2A2A2A;right:9.90px;transform:scaleX(0.9400);transform-origin:100% 0;">$583,939</div><div class="t" style="top:386px;font-size:8.3px;color:#2A2A2A;left:220.80px;transform:scaleX(0.9400);transform-origin:0 0;">2030</div><div class="t" style="top:386px;font-size:8.3px;color:#2A2A2A;right:461.60px;transform:scaleX(0.9400);transform-origin:100% 0;">55</div><div class="t" style="top:386px;font-size:8.3px;color:#2A2A2A;right:431.00px;transform:scaleX(0.9400);transform-origin:100% 0;">53</div><div class="t" style="top:386px;font-size:8.3px;color:#2A2A2A;right:377.80px;transform:scaleX(0.9400);transform-origin:100% 0;">$583,939</div><div class="t" style="top:386px;font-size:8.3px;color:#2A2A2A;right:330.00px;transform:scaleX(0.9400);transform-origin:100% 0;">7.5%</div><div class="t" style="top:386px;font-size:8.3px;color:#37A037;right:287.70px;transform:scaleX(0.9400);transform-origin:100% 0;">$43,795</div><div class="t" style="top:386px;font-size:8.3px;color:#CACACA;left:297.00px;width:300px;text-align:center;transform:scaleX(0.9400);transform-origin:50% 0;">-</div><div class="t" style="top:386px;font-size:8.3px;color:#FF3535;right:233.00px;transform:scaleX(0.9400);transform-origin:100% 0;">$0</div><div class="t" style="top:386px;font-size:8.3px;color:#CACACA;left:351.50px;width:300px;text-align:center;transform:scaleX(0.9400);transform-origin:50% 0;">+</div><div class="t" style="top:386px;font-size:8.3px;color:#2A2A2A;right:183.20px;transform:scaleX(0.9400);transform-origin:100% 0;">0</div><div class="t" style="top:386px;font-size:8.3px;color:#CACACA;left:404.70px;width:300px;text-align:center;transform:scaleX(0.9400);transform-origin:50% 0;">+</div><div class="t" style="top:386px;font-size:8.3px;color:#2A2A2A;right:118.40px;transform:scaleX(0.9400);transform-origin:100% 0;">$0</div><div class="t" style="top:386px;font-size:8.3px;color:#CACACA;left:471.50px;width:300px;text-align:center;transform:scaleX(0.9400);transform-origin:50% 0;">=</div><div class="t" style="top:386px;font-size:8.3px;color:#37A037;right:57.70px;transform:scaleX(0.9400);transform-origin:100% 0;">$43,795</div><div class="t" style="top:386px;font-size:8.3px;color:#2A2A2A;right:9.90px;transform:scaleX(0.9400);transform-origin:100% 0;">$627,734</div><div class="t" style="top:397px;font-size:8.3px;color:#2A2A2A;left:220.80px;transform:scaleX(0.9400);transform-origin:0 0;">2031</div><div class="t" style="top:397px;font-size:8.3px;color:#2A2A2A;right:461.60px;transform:scaleX(0.9400);transform-origin:100% 0;">56</div><div class="t" style="top:397px;font-size:8.3px;color:#2A2A2A;right:431.00px;transform:scaleX(0.9400);transform-origin:100% 0;">54</div><div class="t" style="top:397px;font-size:8.3px;color:#2A2A2A;right:377.80px;transform:scaleX(0.9400);transform-origin:100% 0;">$627,734</div><div class="t" style="top:397px;font-size:8.3px;color:#2A2A2A;right:330.00px;transform:scaleX(0.9400);transform-origin:100% 0;">7.5%</div><div class="t" style="top:397px;font-size:8.3px;color:#37A037;right:287.70px;transform:scaleX(0.9400);transform-origin:100% 0;">$47,080</div><div class="t" style="top:397px;font-size:8.3px;color:#CACACA;left:297.00px;width:300px;text-align:center;transform:scaleX(0.9400);transform-origin:50% 0;">-</div><div class="t" style="top:397px;font-size:8.3px;color:#FF3535;right:233.00px;transform:scaleX(0.9400);transform-origin:100% 0;">$0</div><div class="t" style="top:397px;font-size:8.3px;color:#CACACA;left:351.50px;width:300px;text-align:center;transform:scaleX(0.9400);transform-origin:50% 0;">+</div><div class="t" style="top:397px;font-size:8.3px;color:#2A2A2A;right:183.20px;transform:scaleX(0.9400);transform-origin:100% 0;">0</div><div class="t" style="top:397px;font-size:8.3px;color:#CACACA;left:404.70px;width:300px;text-align:center;transform:scaleX(0.9400);transform-origin:50% 0;">+</div><div class="t" style="top:397px;font-size:8.3px;color:#2A2A2A;right:118.40px;transform:scaleX(0.9400);transform-origin:100% 0;">-$10,000</div><div class="t" style="top:397px;font-size:8.3px;color:#CACACA;left:471.50px;width:300px;text-align:center;transform:scaleX(0.9400);transform-origin:50% 0;">=</div><div class="t" style="top:397px;font-size:8.3px;color:#37A037;right:57.70px;transform:scaleX(0.9400);transform-origin:100% 0;">$37,080</div><div class="t" style="top:397px;font-size:8.3px;color:#2A2A2A;right:9.90px;transform:scaleX(0.9400);transform-origin:100% 0;">$664,814</div><div class="t" style="top:409px;font-size:8.3px;color:#2A2A2A;left:220.80px;transform:scaleX(0.9400);transform-origin:0 0;">2032</div><div class="t" style="top:409px;font-size:8.3px;color:#2A2A2A;right:461.60px;transform:scaleX(0.9400);transform-origin:100% 0;">57</div><div class="t" style="top:409px;font-size:8.3px;color:#2A2A2A;right:431.00px;transform:scaleX(0.9400);transform-origin:100% 0;">55</div><div class="t" style="top:409px;font-size:8.3px;color:#2A2A2A;right:377.80px;transform:scaleX(0.9400);transform-origin:100% 0;">$664,814</div><div class="t" style="top:409px;font-size:8.3px;color:#2A2A2A;right:330.00px;transform:scaleX(0.9400);transform-origin:100% 0;">7.5%</div><div class="t" style="top:409px;font-size:8.3px;color:#37A037;right:287.70px;transform:scaleX(0.9400);transform-origin:100% 0;">$49,861</div><div class="t" style="top:409px;font-size:8.3px;color:#CACACA;left:297.00px;width:300px;text-align:center;transform:scaleX(0.9400);transform-origin:50% 0;">-</div><div class="t" style="top:409px;font-size:8.3px;color:#FF3535;right:233.00px;transform:scaleX(0.9400);transform-origin:100% 0;">$0</div><div class="t" style="top:409px;font-size:8.3px;color:#CACACA;left:351.50px;width:300px;text-align:center;transform:scaleX(0.9400);transform-origin:50% 0;">+</div><div class="t" style="top:409px;font-size:8.3px;color:#2A2A2A;right:183.20px;transform:scaleX(0.9400);transform-origin:100% 0;">0</div><div class="t" style="top:409px;font-size:8.3px;color:#CACACA;left:404.70px;width:300px;text-align:center;transform:scaleX(0.9400);transform-origin:50% 0;">+</div><div class="t" style="top:409px;font-size:8.3px;color:#2A2A2A;right:118.40px;transform:scaleX(0.9400);transform-origin:100% 0;">-$10,000</div><div class="t" style="top:409px;font-size:8.3px;color:#CACACA;left:471.50px;width:300px;text-align:center;transform:scaleX(0.9400);transform-origin:50% 0;">=</div><div class="t" style="top:409px;font-size:8.3px;color:#37A037;right:57.70px;transform:scaleX(0.9400);transform-origin:100% 0;">$39,861</div><div class="t" style="top:409px;font-size:8.3px;color:#2A2A2A;right:9.90px;transform:scaleX(0.9400);transform-origin:100% 0;">$704,675</div><div class="t" style="top:420px;font-size:8.3px;color:#2A2A2A;left:220.80px;transform:scaleX(0.9400);transform-origin:0 0;">2033</div><div class="t" style="top:420px;font-size:8.3px;color:#2A2A2A;right:461.60px;transform:scaleX(0.9400);transform-origin:100% 0;">58</div><div class="t" style="top:420px;font-size:8.3px;color:#2A2A2A;right:431.00px;transform:scaleX(0.9400);transform-origin:100% 0;">56</div><div class="t" style="top:420px;font-size:8.3px;color:#2A2A2A;right:377.80px;transform:scaleX(0.9400);transform-origin:100% 0;">$704,675</div><div class="t" style="top:420px;font-size:8.3px;color:#2A2A2A;right:330.00px;transform:scaleX(0.9400);transform-origin:100% 0;">7.5%</div><div class="t" style="top:420px;font-size:8.3px;color:#37A037;right:287.70px;transform:scaleX(0.9400);transform-origin:100% 0;">$52,851</div><div class="t" style="top:420px;font-size:8.3px;color:#CACACA;left:297.00px;width:300px;text-align:center;transform:scaleX(0.9400);transform-origin:50% 0;">-</div><div class="t" style="top:420px;font-size:8.3px;color:#FF3535;right:233.00px;transform:scaleX(0.9400);transform-origin:100% 0;">$0</div><div class="t" style="top:420px;font-size:8.3px;color:#CACACA;left:351.50px;width:300px;text-align:center;transform:scaleX(0.9400);transform-origin:50% 0;">+</div><div class="t" style="top:420px;font-size:8.3px;color:#2A2A2A;right:183.20px;transform:scaleX(0.9400);transform-origin:100% 0;">0</div><div class="t" style="top:420px;font-size:8.3px;color:#CACACA;left:404.70px;width:300px;text-align:center;transform:scaleX(0.9400);transform-origin:50% 0;">+</div><div class="t" style="top:420px;font-size:8.3px;color:#2A2A2A;right:118.40px;transform:scaleX(0.9400);transform-origin:100% 0;">-$10,000</div><div class="t" style="top:420px;font-size:8.3px;color:#CACACA;left:471.50px;width:300px;text-align:center;transform:scaleX(0.9400);transform-origin:50% 0;">=</div><div class="t" style="top:420px;font-size:8.3px;color:#37A037;right:57.70px;transform:scaleX(0.9400);transform-origin:100% 0;">$42,851</div><div class="t" style="top:420px;font-size:8.3px;color:#2A2A2A;right:9.90px;transform:scaleX(0.9400);transform-origin:100% 0;">$747,526</div><div class="t" style="top:431px;font-size:8.3px;color:#2A2A2A;left:220.80px;transform:scaleX(0.9400);transform-origin:0 0;">2034</div><div class="t" style="top:431px;font-size:8.3px;color:#2A2A2A;right:461.60px;transform:scaleX(0.9400);transform-origin:100% 0;">59</div><div class="t" style="top:431px;font-size:8.3px;color:#2A2A2A;right:431.00px;transform:scaleX(0.9400);transform-origin:100% 0;">57</div><div class="t" style="top:431px;font-size:8.3px;color:#2A2A2A;right:377.80px;transform:scaleX(0.9400);transform-origin:100% 0;">$747,526</div><div class="t" style="top:431px;font-size:8.3px;color:#2A2A2A;right:330.00px;transform:scaleX(0.9400);transform-origin:100% 0;">7.5%</div><div class="t" style="top:431px;font-size:8.3px;color:#37A037;right:287.70px;transform:scaleX(0.9400);transform-origin:100% 0;">$56,064</div><div class="t" style="top:431px;font-size:8.3px;color:#CACACA;left:297.00px;width:300px;text-align:center;transform:scaleX(0.9400);transform-origin:50% 0;">-</div><div class="t" style="top:431px;font-size:8.3px;color:#FF3535;right:233.00px;transform:scaleX(0.9400);transform-origin:100% 0;">$0</div><div class="t" style="top:431px;font-size:8.3px;color:#CACACA;left:351.50px;width:300px;text-align:center;transform:scaleX(0.9400);transform-origin:50% 0;">+</div><div class="t" style="top:431px;font-size:8.3px;color:#2A2A2A;right:183.20px;transform:scaleX(0.9400);transform-origin:100% 0;">0</div><div class="t" style="top:431px;font-size:8.3px;color:#CACACA;left:404.70px;width:300px;text-align:center;transform:scaleX(0.9400);transform-origin:50% 0;">+</div><div class="t" style="top:431px;font-size:8.3px;color:#2A2A2A;right:118.40px;transform:scaleX(0.9400);transform-origin:100% 0;">-$10,000</div><div class="t" style="top:431px;font-size:8.3px;color:#CACACA;left:471.50px;width:300px;text-align:center;transform:scaleX(0.9400);transform-origin:50% 0;">=</div><div class="t" style="top:431px;font-size:8.3px;color:#37A037;right:57.70px;transform:scaleX(0.9400);transform-origin:100% 0;">$46,064</div><div class="t" style="top:431px;font-size:8.3px;color:#2A2A2A;right:9.90px;transform:scaleX(0.9400);transform-origin:100% 0;">$793,590</div><div class="t" style="top:443px;font-size:8.3px;color:#2A2A2A;left:220.80px;transform:scaleX(0.9400);transform-origin:0 0;">2035</div><div class="t" style="top:443px;font-size:8.3px;color:#2A2A2A;right:461.60px;transform:scaleX(0.9400);transform-origin:100% 0;">60</div><div class="t" style="top:443px;font-size:8.3px;color:#2A2A2A;right:431.00px;transform:scaleX(0.9400);transform-origin:100% 0;">58</div><div class="t" style="top:443px;font-size:8.3px;color:#2A2A2A;right:377.80px;transform:scaleX(0.9400);transform-origin:100% 0;">$793,590</div><div class="t" style="top:443px;font-size:8.3px;color:#2A2A2A;right:330.00px;transform:scaleX(0.9400);transform-origin:100% 0;">6.0%</div><div class="t" style="top:443px;font-size:8.3px;color:#37A037;right:287.70px;transform:scaleX(0.9400);transform-origin:100% 0;">$47,615</div><div class="t" style="top:443px;font-size:8.3px;color:#CACACA;left:297.00px;width:300px;text-align:center;transform:scaleX(0.9400);transform-origin:50% 0;">-</div><div class="t" style="top:443px;font-size:8.3px;color:#FF3535;right:233.00px;transform:scaleX(0.9400);transform-origin:100% 0;">$0</div><div class="t" style="top:443px;font-size:8.3px;color:#CACACA;left:351.50px;width:300px;text-align:center;transform:scaleX(0.9400);transform-origin:50% 0;">+</div><div class="t" style="top:443px;font-size:8.3px;color:#2A2A2A;right:183.20px;transform:scaleX(0.9400);transform-origin:100% 0;">0</div><div class="t" style="top:443px;font-size:8.3px;color:#CACACA;left:404.70px;width:300px;text-align:center;transform:scaleX(0.9400);transform-origin:50% 0;">+</div><div class="t" style="top:443px;font-size:8.3px;color:#2A2A2A;right:118.40px;transform:scaleX(0.9400);transform-origin:100% 0;">-$10,000</div><div class="t" style="top:443px;font-size:8.3px;color:#CACACA;left:471.50px;width:300px;text-align:center;transform:scaleX(0.9400);transform-origin:50% 0;">=</div><div class="t" style="top:443px;font-size:8.3px;color:#37A037;right:57.70px;transform:scaleX(0.9400);transform-origin:100% 0;">$37,615</div><div class="t" style="top:443px;font-size:8.3px;color:#2A2A2A;right:9.90px;transform:scaleX(0.9400);transform-origin:100% 0;">$831,206</div><div class="t" style="top:454px;font-size:8.3px;color:#2A2A2A;left:220.80px;transform:scaleX(0.9400);transform-origin:0 0;">2036</div><div class="t" style="top:454px;font-size:8.3px;color:#2A2A2A;right:461.60px;transform:scaleX(0.9400);transform-origin:100% 0;">61</div><div class="t" style="top:454px;font-size:8.3px;color:#2A2A2A;right:431.00px;transform:scaleX(0.9400);transform-origin:100% 0;">59</div><div class="t" style="top:454px;font-size:8.3px;color:#2A2A2A;right:377.80px;transform:scaleX(0.9400);transform-origin:100% 0;">$831,206</div><div class="t" style="top:454px;font-size:8.3px;color:#2A2A2A;right:330.00px;transform:scaleX(0.9400);transform-origin:100% 0;">6.0%</div><div class="t" style="top:454px;font-size:8.3px;color:#37A037;right:287.70px;transform:scaleX(0.9400);transform-origin:100% 0;">$49,872</div><div class="t" style="top:454px;font-size:8.3px;color:#CACACA;left:297.00px;width:300px;text-align:center;transform:scaleX(0.9400);transform-origin:50% 0;">-</div><div class="t" style="top:454px;font-size:8.3px;color:#FF3535;right:233.00px;transform:scaleX(0.9400);transform-origin:100% 0;">$0</div><div class="t" style="top:454px;font-size:8.3px;color:#CACACA;left:351.50px;width:300px;text-align:center;transform:scaleX(0.9400);transform-origin:50% 0;">+</div><div class="t" style="top:454px;font-size:8.3px;color:#2A2A2A;right:183.20px;transform:scaleX(0.9400);transform-origin:100% 0;">0</div><div class="t" style="top:454px;font-size:8.3px;color:#CACACA;left:404.70px;width:300px;text-align:center;transform:scaleX(0.9400);transform-origin:50% 0;">+</div><div class="t" style="top:454px;font-size:8.3px;color:#2A2A2A;right:118.40px;transform:scaleX(0.9400);transform-origin:100% 0;">-$10,000</div><div class="t" style="top:454px;font-size:8.3px;color:#CACACA;left:471.50px;width:300px;text-align:center;transform:scaleX(0.9400);transform-origin:50% 0;">=</div><div class="t" style="top:454px;font-size:8.3px;color:#37A037;right:57.70px;transform:scaleX(0.9400);transform-origin:100% 0;">$39,872</div><div class="t" style="top:454px;font-size:8.3px;color:#2A2A2A;right:9.90px;transform:scaleX(0.9400);transform-origin:100% 0;">$871,078</div><div class="t" style="top:465px;font-size:8.3px;color:#2A2A2A;left:220.80px;transform:scaleX(0.9400);transform-origin:0 0;">2037</div><div class="t" style="top:465px;font-size:8.3px;color:#2A2A2A;right:461.60px;transform:scaleX(0.9400);transform-origin:100% 0;">62</div><div class="t" style="top:465px;font-size:8.3px;color:#2A2A2A;right:431.00px;transform:scaleX(0.9400);transform-origin:100% 0;">60</div><div class="t" style="top:465px;font-size:8.3px;color:#2A2A2A;right:377.80px;transform:scaleX(0.9400);transform-origin:100% 0;">$871,078</div><div class="t" style="top:465px;font-size:8.3px;color:#2A2A2A;right:330.00px;transform:scaleX(0.9400);transform-origin:100% 0;">6.0%</div><div class="t" style="top:465px;font-size:8.3px;color:#37A037;right:287.70px;transform:scaleX(0.9400);transform-origin:100% 0;">$52,265</div><div class="t" style="top:465px;font-size:8.3px;color:#CACACA;left:297.00px;width:300px;text-align:center;transform:scaleX(0.9400);transform-origin:50% 0;">-</div><div class="t" style="top:465px;font-size:8.3px;color:#FF3535;right:233.00px;transform:scaleX(0.9400);transform-origin:100% 0;">$0</div><div class="t" style="top:465px;font-size:8.3px;color:#CACACA;left:351.50px;width:300px;text-align:center;transform:scaleX(0.9400);transform-origin:50% 0;">+</div><div class="t" style="top:465px;font-size:8.3px;color:#2A2A2A;right:183.20px;transform:scaleX(0.9400);transform-origin:100% 0;">0</div><div class="t" style="top:465px;font-size:8.3px;color:#CACACA;left:404.70px;width:300px;text-align:center;transform:scaleX(0.9400);transform-origin:50% 0;">+</div><div class="t" style="top:465px;font-size:8.3px;color:#2A2A2A;right:118.40px;transform:scaleX(0.9400);transform-origin:100% 0;">-$10,000</div><div class="t" style="top:465px;font-size:8.3px;color:#CACACA;left:471.50px;width:300px;text-align:center;transform:scaleX(0.9400);transform-origin:50% 0;">=</div><div class="t" style="top:465px;font-size:8.3px;color:#37A037;right:57.70px;transform:scaleX(0.9400);transform-origin:100% 0;">$42,265</div><div class="t" style="top:465px;font-size:8.3px;color:#2A2A2A;right:9.90px;transform:scaleX(0.9400);transform-origin:100% 0;">$913,343</div><div class="t" style="top:477px;font-size:8.3px;color:#2A2A2A;left:220.80px;transform:scaleX(0.9400);transform-origin:0 0;">2038</div><div class="t" style="top:477px;font-size:8.3px;color:#2A2A2A;right:461.60px;transform:scaleX(0.9400);transform-origin:100% 0;">63</div><div class="t" style="top:477px;font-size:8.3px;color:#2A2A2A;right:431.00px;transform:scaleX(0.9400);transform-origin:100% 0;">61</div><div class="t" style="top:477px;font-size:8.3px;color:#2A2A2A;right:377.80px;transform:scaleX(0.9400);transform-origin:100% 0;">$913,343</div><div class="t" style="top:477px;font-size:8.3px;color:#2A2A2A;right:330.00px;transform:scaleX(0.9400);transform-origin:100% 0;">6.0%</div><div class="t" style="top:477px;font-size:8.3px;color:#37A037;right:287.70px;transform:scaleX(0.9400);transform-origin:100% 0;">$54,801</div><div class="t" style="top:477px;font-size:8.3px;color:#CACACA;left:297.00px;width:300px;text-align:center;transform:scaleX(0.9400);transform-origin:50% 0;">-</div><div class="t" style="top:477px;font-size:8.3px;color:#FF3535;right:233.00px;transform:scaleX(0.9400);transform-origin:100% 0;">$0</div><div class="t" style="top:477px;font-size:8.3px;color:#CACACA;left:351.50px;width:300px;text-align:center;transform:scaleX(0.9400);transform-origin:50% 0;">+</div><div class="t" style="top:477px;font-size:8.3px;color:#2A2A2A;right:183.20px;transform:scaleX(0.9400);transform-origin:100% 0;">0</div><div class="t" style="top:477px;font-size:8.3px;color:#CACACA;left:404.70px;width:300px;text-align:center;transform:scaleX(0.9400);transform-origin:50% 0;">+</div><div class="t" style="top:477px;font-size:8.3px;color:#2A2A2A;right:118.40px;transform:scaleX(0.9400);transform-origin:100% 0;">-$10,000</div><div class="t" style="top:477px;font-size:8.3px;color:#CACACA;left:471.50px;width:300px;text-align:center;transform:scaleX(0.9400);transform-origin:50% 0;">=</div><div class="t" style="top:477px;font-size:8.3px;color:#37A037;right:57.70px;transform:scaleX(0.9400);transform-origin:100% 0;">$44,801</div><div class="t" style="top:477px;font-size:8.3px;color:#2A2A2A;right:9.90px;transform:scaleX(0.9400);transform-origin:100% 0;">$958,143</div><div class="t" style="top:488px;font-size:8.3px;color:#2A2A2A;left:220.80px;transform:scaleX(0.9400);transform-origin:0 0;">2039</div><div class="t" style="top:488px;font-size:8.3px;color:#2A2A2A;right:461.60px;transform:scaleX(0.9400);transform-origin:100% 0;">64</div><div class="t" style="top:488px;font-size:8.3px;color:#2A2A2A;right:431.00px;transform:scaleX(0.9400);transform-origin:100% 0;">62</div><div class="t" style="top:488px;font-size:8.3px;color:#2A2A2A;right:377.80px;transform:scaleX(0.9400);transform-origin:100% 0;">$958,143</div><div class="t" style="top:488px;font-size:8.3px;color:#2A2A2A;right:330.00px;transform:scaleX(0.9400);transform-origin:100% 0;">6.0%</div><div class="t" style="top:488px;font-size:8.3px;color:#37A037;right:287.70px;transform:scaleX(0.9400);transform-origin:100% 0;">$57,489</div><div class="t" style="top:488px;font-size:8.3px;color:#CACACA;left:297.00px;width:300px;text-align:center;transform:scaleX(0.9400);transform-origin:50% 0;">-</div><div class="t" style="top:488px;font-size:8.3px;color:#FF3535;right:233.00px;transform:scaleX(0.9400);transform-origin:100% 0;">$0</div><div class="t" style="top:488px;font-size:8.3px;color:#CACACA;left:351.50px;width:300px;text-align:center;transform:scaleX(0.9400);transform-origin:50% 0;">+</div><div class="t" style="top:488px;font-size:8.3px;color:#2A2A2A;right:183.20px;transform:scaleX(0.9400);transform-origin:100% 0;">0</div><div class="t" style="top:488px;font-size:8.3px;color:#CACACA;left:404.70px;width:300px;text-align:center;transform:scaleX(0.9400);transform-origin:50% 0;">+</div><div class="t" style="top:488px;font-size:8.3px;color:#2A2A2A;right:118.40px;transform:scaleX(0.9400);transform-origin:100% 0;">-$10,000</div><div class="t" style="top:488px;font-size:8.3px;color:#CACACA;left:471.50px;width:300px;text-align:center;transform:scaleX(0.9400);transform-origin:50% 0;">=</div><div class="t" style="top:488px;font-size:8.3px;color:#37A037;right:57.70px;transform:scaleX(0.9400);transform-origin:100% 0;">$47,489</div><div class="t" style="top:488px;font-size:8.3px;color:#2A2A2A;right:9.90px;transform:scaleX(0.9400);transform-origin:100% 0;">$1,005,632</div><div class="t" style="top:499px;font-size:8.3px;color:#2A2A2A;left:220.80px;transform:scaleX(0.9400);transform-origin:0 0;">2040</div><div class="t" style="top:499px;font-size:8.3px;color:#2A2A2A;right:461.60px;transform:scaleX(0.9400);transform-origin:100% 0;">65</div><div class="t" style="top:499px;font-size:8.3px;color:#2A2A2A;right:431.00px;transform:scaleX(0.9400);transform-origin:100% 0;">63</div><div class="t" style="top:499px;font-size:8.3px;color:#2A2A2A;right:377.80px;transform:scaleX(0.9400);transform-origin:100% 0;">$1,005,632</div><div class="t" style="top:499px;font-size:8.3px;color:#2A2A2A;right:330.00px;transform:scaleX(0.9400);transform-origin:100% 0;">6.0%</div><div class="t" style="top:499px;font-size:8.3px;color:#37A037;right:287.70px;transform:scaleX(0.9400);transform-origin:100% 0;">$60,338</div><div class="t" style="top:499px;font-size:8.3px;color:#CACACA;left:297.00px;width:300px;text-align:center;transform:scaleX(0.9400);transform-origin:50% 0;">-</div><div class="t" style="top:499px;font-size:8.3px;color:#FF3535;right:233.00px;transform:scaleX(0.9400);transform-origin:100% 0;">$40,225</div><div class="t" style="top:499px;font-size:8.3px;color:#CACACA;left:351.50px;width:300px;text-align:center;transform:scaleX(0.9400);transform-origin:50% 0;">+</div><div class="t" style="top:499px;font-size:8.3px;color:#2A2A2A;right:183.20px;transform:scaleX(0.9400);transform-origin:100% 0;">0</div><div class="t" style="top:499px;font-size:8.3px;color:#CACACA;left:404.70px;width:300px;text-align:center;transform:scaleX(0.9400);transform-origin:50% 0;">+</div><div class="t" style="top:499px;font-size:8.3px;color:#2A2A2A;right:118.40px;transform:scaleX(0.9400);transform-origin:100% 0;">-$10,000</div><div class="t" style="top:499px;font-size:8.3px;color:#CACACA;left:471.50px;width:300px;text-align:center;transform:scaleX(0.9400);transform-origin:50% 0;">=</div><div class="t" style="top:499px;font-size:8.3px;color:#37A037;right:57.70px;transform:scaleX(0.9400);transform-origin:100% 0;">$10,113</div><div class="t" style="top:499px;font-size:8.3px;color:#2A2A2A;right:9.90px;transform:scaleX(0.9400);transform-origin:100% 0;">$1,015,744</div><div class="t" style="top:511px;font-size:8.3px;color:#2A2A2A;left:220.80px;transform:scaleX(0.9400);transform-origin:0 0;">2041</div><div class="t" style="top:511px;font-size:8.3px;color:#2A2A2A;right:461.60px;transform:scaleX(0.9400);transform-origin:100% 0;">66</div><div class="t" style="top:511px;font-size:8.3px;color:#2A2A2A;right:431.00px;transform:scaleX(0.9400);transform-origin:100% 0;">64</div><div class="t" style="top:511px;font-size:8.3px;color:#2A2A2A;right:377.80px;transform:scaleX(0.9400);transform-origin:100% 0;">$1,015,744</div><div class="t" style="top:511px;font-size:8.3px;color:#2A2A2A;right:330.00px;transform:scaleX(0.9400);transform-origin:100% 0;">6.0%</div><div class="t" style="top:511px;font-size:8.3px;color:#37A037;right:287.70px;transform:scaleX(0.9400);transform-origin:100% 0;">$60,945</div><div class="t" style="top:511px;font-size:8.3px;color:#CACACA;left:297.00px;width:300px;text-align:center;transform:scaleX(0.9400);transform-origin:50% 0;">-</div><div class="t" style="top:511px;font-size:8.3px;color:#FF3535;right:233.00px;transform:scaleX(0.9400);transform-origin:100% 0;">$40,630</div><div class="t" style="top:511px;font-size:8.3px;color:#CACACA;left:351.50px;width:300px;text-align:center;transform:scaleX(0.9400);transform-origin:50% 0;">+</div><div class="t" style="top:511px;font-size:8.3px;color:#2A2A2A;right:183.20px;transform:scaleX(0.9400);transform-origin:100% 0;">0</div><div class="t" style="top:511px;font-size:8.3px;color:#CACACA;left:404.70px;width:300px;text-align:center;transform:scaleX(0.9400);transform-origin:50% 0;">+</div><div class="t" style="top:511px;font-size:8.3px;color:#2A2A2A;right:118.40px;transform:scaleX(0.9400);transform-origin:100% 0;">$0</div><div class="t" style="top:511px;font-size:8.3px;color:#CACACA;left:471.50px;width:300px;text-align:center;transform:scaleX(0.9400);transform-origin:50% 0;">=</div><div class="t" style="top:511px;font-size:8.3px;color:#37A037;right:57.70px;transform:scaleX(0.9400);transform-origin:100% 0;">$20,315</div><div class="t" style="top:511px;font-size:8.3px;color:#2A2A2A;right:9.90px;transform:scaleX(0.9400);transform-origin:100% 0;">$1,036,059</div><div class="t" style="top:8px;font-size:8.3px;color:#3B4252;font-weight:700;left:159.20px;width:300px;text-align:center;transform:scaleX(0.8477);transform-origin:50% 0;">PORTFOLIO GOAL</div><div class="t" style="top:26px;font-size:8.5px;color:#1E1E1E;font-weight:700;left:159.50px;width:300px;text-align:center;transform:scaleX(0.9049);transform-origin:50% 0;">$1,000,000</div><div class="t" style="top:8px;font-size:8.3px;color:#3B4252;font-weight:700;left:386.80px;width:300px;text-align:center;transform:scaleX(0.8931);transform-origin:50% 0;">PLAN OUTCOME</div><div class="t" style="top:27px;font-size:8.4px;color:#6CC06A;left:387.10px;width:300px;text-align:center;transform:scaleX(0.9441);transform-origin:50% 0;">Goal reached in 2039 at ages 64 &amp; 62!</div><div class="t" style="top:3px;font-size:16.4px;color:#FFFFFF;left:678.30px;transform:scaleX(1.0412);transform-origin:0 0;-webkit-text-stroke:0.55px #fff;">tiller</div><div class="t" style="top:22px;font-size:6.9px;color:#3385DC;font-weight:700;left:546.30px;width:300px;text-align:center;transform:scaleX(0.8425);transform-origin:50% 0;letter-spacing:0.25px;-webkit-text-stroke:0.2px #3385DC;">COMMUNITY</div><div class="t" style="top:36px;font-size:7.65px;color:#8A8A8A;left:668.60px;">Learn &amp; Discuss</div>
</body></html>
